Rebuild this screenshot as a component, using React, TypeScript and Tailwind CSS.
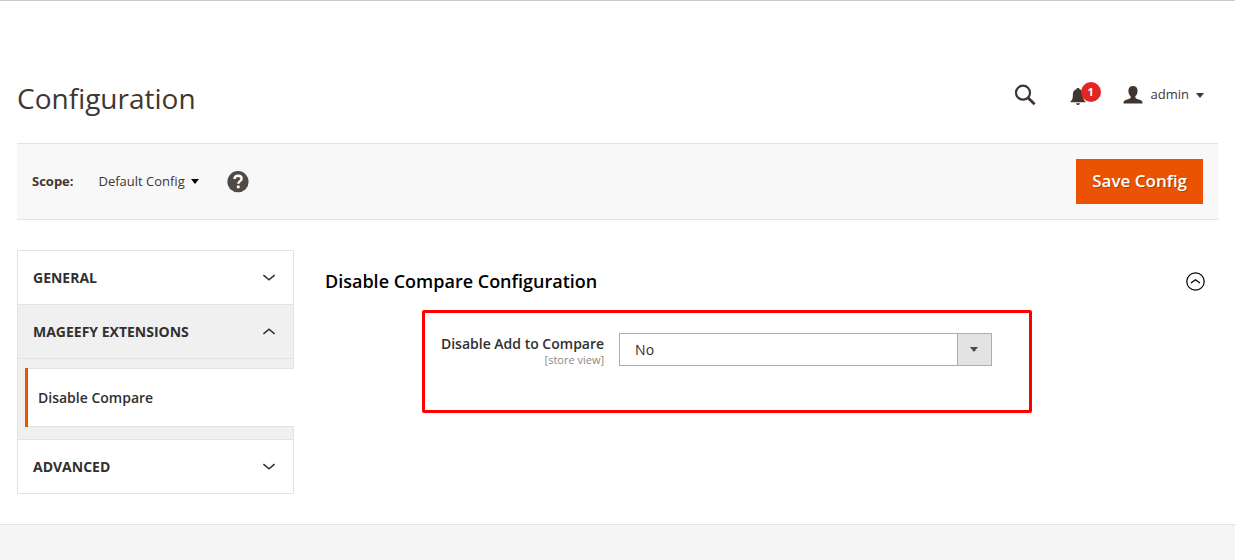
import { useState } from "react";

function Caret({ className = "" }: { className?: string }) {
  return (
    <svg viewBox="0 0 8 5" aria-hidden="true" className={`h-[5px] w-2 fill-current ${className}`}>
      <path d="M0 0h8L4 5z" />
    </svg>
  );
}

function Chevron({ up = false }: { up?: boolean }) {
  return (
    <svg viewBox="0 0 12 8" aria-hidden="true" className="h-2 w-3 fill-none stroke-current stroke-[1.6]">
      <path d={up ? "M.4 6 6 1.200 11.600 6" : "M.4 1 6 5.800 11.600 1"} />
    </svg>
  );
}

function NavHeading({ title, open, onClick }: { title: string; open: boolean; onClick: () => void }) {
  return (
    <button
      type="button"
      aria-expanded={open}
      onClick={onClick}
      className={`flex h-[54px] w-full items-center justify-between border border-b-0 border-[#e3e3e3] pr-[18px] pl-[15px] text-sm font-bold text-[#303030] uppercase ${open ? "bg-[#f0f0f0]" : "bg-white"}`}
    >
      {title}
      <Chevron up={open} />
    </button>
  );
}

function Header() {
  return (
    <header className="flex items-center justify-between border-t border-[#cacaca] px-[17px] pt-[71px] pb-[19px]">
      <h1 className="text-[28px] leading-[52px] text-[#41362f]">Configuration</h1>
      <div className="flex items-center pr-[14px] pb-[6px] text-[#41362f]">
        <button type="button" aria-label="Search" className="mr-[34px]">
          <svg viewBox="0 0 22 22" className="size-[22px] fill-none stroke-current">
            <circle cx="9" cy="8.700" r="7" strokeWidth="2.200" />
            <path d="m14 13.700 6.600 6.600" strokeWidth="2.800" />
          </svg>
        </button>
        <button type="button" aria-label="Notifications" className="relative mr-[22px] h-[22px] w-[31px]">
          <svg viewBox="0 0 16 18" className="mt-[3px] h-[18px] w-4 fill-current">
            <path d="M8 0c.9 0 1.500.5 1.600 1.200 2.300.7 3.500 2.500 3.500 5 0 4.500.8 6.100 2.400 7.300v.8H.5v-.8c1.600-1.200 2.400-2.800 2.400-7.300 0-2.500 1.200-4.300 3.500-5C6.500.5 7.100 0 8 0zM6 15.200h4c-.3 1.200-1 1.800-2 1.800s-1.700-.6-2-1.800z" />
          </svg>
          <span className="absolute -top-0.5 right-0 flex size-5 items-center justify-center rounded-full bg-[#e22626] text-[11px] font-bold text-white">
            1
          </span>
        </button>
        <button type="button" aria-haspopup="menu" className="flex items-center text-[13px]">
          <svg viewBox="0 0 20 18" aria-hidden="true" className="mr-2 h-[18px] w-5 fill-current">
            <path d="M10 0c2.900 0 4.600 1.700 4.600 4.700 0 2.300-.9 4.300-2.200 5.400v1.600c.3.900 1.500 1.200 3.300 1.700 2.600.7 3.800 1.500 3.800 3.300v.7H.5v-.7c0-1.800 1.200-2.600 3.800-3.300 1.800-.5 3-.8 3.300-1.700v-1.600C6.300 9 5.400 7 5.400 4.700 5.400 1.700 7.100 0 10 0z" />
          </svg>
          admin
          <Caret className="ml-[7px]" />
        </button>
      </div>
    </header>
  );
}

function ScopeBar() {
  return (
    <div className="mx-[17px] flex items-center border-y border-[#e3e3e3] bg-[#f8f8f8] p-[15px]">
      <label htmlFor="scope" className="mr-[25px] text-[13px] font-bold text-[#41362f]">
        Scope:
      </label>
      <div className="relative mr-[28px] flex items-center">
        <select id="scope" className="appearance-none bg-transparent pr-[13px] text-[13px] text-[#41362f]">
          <option>Default Config</option>
        </select>
        <Caret className="pointer-events-none absolute right-0 text-black" />
      </div>
      <button type="button" aria-label="Help">
        <svg viewBox="0 0 22 22" className="size-[22px]">
          <circle cx="11" cy="10.700" r="10.600" fill="#514943" />
          <path d="M7.500 8c0-2 1.400-3.300 3.500-3.300s3.600 1.100 3.600 3c0 2.500-3.300 2.400-3.300 5" fill="none" stroke="#fff" strokeWidth="2.400" />
          <rect x="9.900" y="14.400" width="2.800" height="2.800" rx=".6" fill="#fff" />
        </svg>
      </button>
      <button
        type="button"
        className="ml-auto bg-[#eb5202] px-4 pt-2.5 pb-[11px] text-[17px] leading-6 font-semibold text-white [text-shadow:1px_1px_0_rgba(0,0,0,0.25)]"
      >
        Save Config
      </button>
    </div>
  );
}

function Sidebar() {
  const [open, setOpen] = useState<string | null>("Mageefy Extensions");
  const toggle = (title: string) => setOpen(open === title ? null : title);
  return (
    <nav aria-label="Configuration sections" className="w-[277px] shrink-0 border-b border-[#e3e3e3]">
      <NavHeading title="General" open={open === "General"} onClick={() => toggle("General")} />
      <NavHeading
        title="Mageefy Extensions"
        open={open === "Mageefy Extensions"}
        onClick={() => toggle("Mageefy Extensions")}
      />
      {open === "Mageefy Extensions" && (
        <div className="border-t border-l border-[#e3e3e3] bg-[#f0f0f0]">
          <div className="h-[9px] border-r border-[#e3e3e3]" />
          <a
            href="#disable-compare"
            aria-current="page"
            className="ml-[7px] flex h-[59px] items-center border-l-[3px] border-[#eb5202] bg-white text-sm font-semibold text-[#303030]"
          >
            <span className="flex h-full w-full items-center border-y border-[#e3e3e3] pl-[10px]">Disable Compare</span>
          </a>
          <div className="h-3 border-r border-[#e3e3e3]" />
        </div>
      )}
      <NavHeading title="Advanced" open={open === "Advanced"} onClick={() => toggle("Advanced")} />
    </nav>
  );
}

function CompareSettings() {
  const [expanded, setExpanded] = useState(true);
  return (
    <section id="disable-compare" className="min-w-0 grow pt-[18px] pr-3">
      <h2>
        <button
          type="button"
          aria-expanded={expanded}
          onClick={() => setExpanded(!expanded)}
          className="flex w-full items-center justify-between text-lg leading-[26px] font-semibold text-black"
        >
          Disable Compare Configuration
          <svg viewBox="0 0 20 20" aria-hidden="true" className="size-5 fill-none stroke-current">
            <circle cx="9.500" cy="10.500" r="8.700" strokeWidth="1.200" />
            <path d="m5 12 4.500-3.200L14 12" strokeWidth="1.300" />
          </svg>
        </button>
      </h2>
      {expanded && (
        <div className="mt-4 ml-[11%] flex max-w-[610px] items-start rounded-xs border-3 border-[#ff0000] pt-5 pr-[37px] pb-11 pl-4">
          <label htmlFor="compare-state" className="mr-[15px] shrink-0 text-right">
            <span className="block text-sm leading-[22px] font-semibold text-[#303030]">Disable Add to Compare</span>
            <span className="block text-[11px] leading-[10px] text-[#8c867e]">[store view]</span>
          </label>
          <div className="relative grow">
            <select
              id="compare-state"
              defaultValue="No"
              className="block h-[33px] w-full appearance-none border border-[#adadad] bg-white pr-10 pl-[15px] text-sm text-[#303030]"
            >
              <option>Yes</option>
              <option>No</option>
            </select>
            <span className="pointer-events-none absolute inset-y-0 right-0 flex w-[35px] items-center justify-center border border-[#adadad] bg-[#e3e3e3] text-[#514943]">
              <Caret />
            </span>
          </div>
        </div>
      )}
    </section>
  );
}

export default function App() {
  return (
    <div className="flex min-h-screen flex-col bg-white font-['Open_Sans',sans-serif]">
      <Header />
      <ScopeBar />
      <main className="flex items-start gap-[31px] px-[17px] py-[30px]">
        <Sidebar />
        <CompareSettings />
      </main>
      <footer className="grow border-t border-[#e3e3e3] bg-[#f5f5f5]" />
    </div>
  );
}
